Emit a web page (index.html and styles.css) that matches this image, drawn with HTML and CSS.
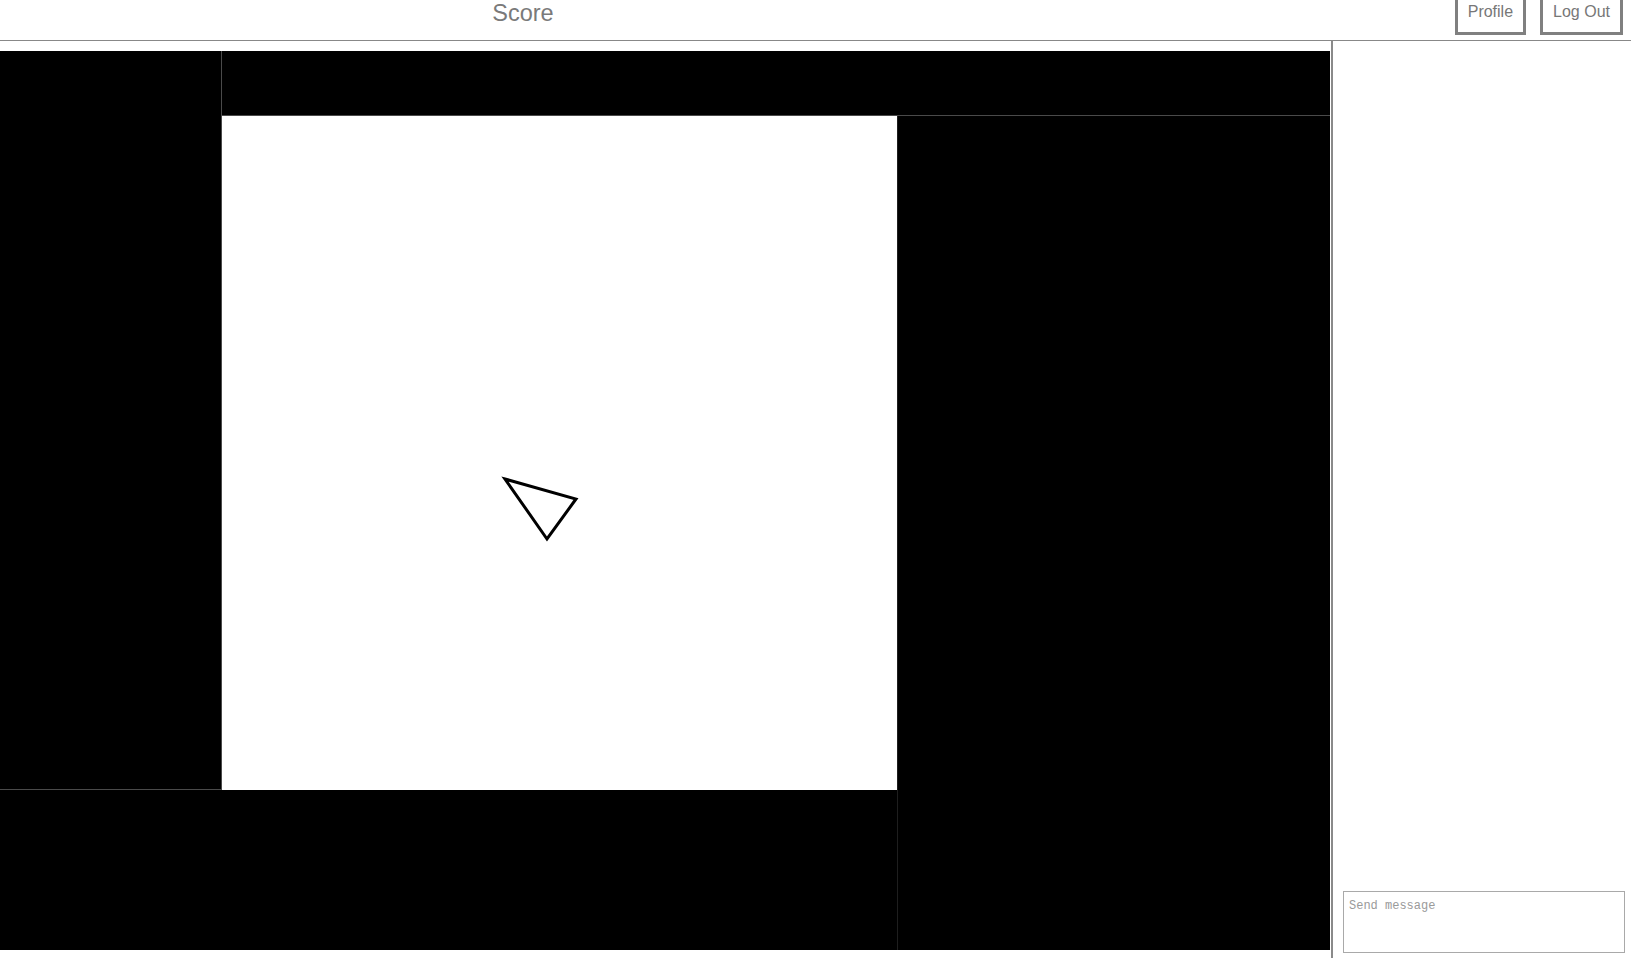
FILE: index.html
```html
<!DOCTYPE html>
<html lang="en">
<head>
<meta charset="utf-8">
<title>Score</title>
<link rel="stylesheet" href="styles.css">
</head>
<body>
<header class="topbar">
  <div class="score">Score</div>
  <nav class="actions">
    <button class="btn" type="button">Profile</button>
    <button class="btn" type="button">Log Out</button>
  </nav>
</header>
<main class="main">
  <section class="game">
    <div class="cell cell-left"></div>
    <div class="cell cell-top"></div>
    <div class="arena">
      <svg class="ship" width="675" height="674" viewBox="0 0 675 674" xmlns="http://www.w3.org/2000/svg">
        <polygon points="283,363 354,383 325,423" fill="none" stroke="#000" stroke-width="3" stroke-linejoin="miter"/>
      </svg>
    </div>
    <div class="cell cell-right"></div>
    <div class="cell cell-bottom"></div>
  </section>
  <aside class="chat">
    <textarea class="chat-input" placeholder="Send message"></textarea>
  </aside>
</main>
</body>
</html>
```
FILE: styles.css
```css
html, body {
  margin: 0;
  padding: 0;
  background: #fff;
}

body {
  font-family: "Liberation Sans", Arial, sans-serif;
  width: 1631px;
  height: 958px;
  overflow: hidden;
}

.topbar {
  display: flex;
  align-items: flex-start;
  height: 40px;
  border-bottom: 1px solid #888;
}

.score {
  width: 1046px;
  text-align: center;
  font-size: 23.5px;
  line-height: 24px;
  color: #7a7a7a;
  padding-top: 1px;
}

.actions {
  margin-left: auto;
  margin-right: 8px;
  display: flex;
  gap: 14px;
}

.btn {
  box-sizing: border-box;
  height: 38px;
  margin-top: -3px;
  border: 3px solid #808080;
  background: #fff;
  padding: 2px 10px 0;
  font-family: "Liberation Sans", Arial, sans-serif;
  font-size: 16px;
  line-height: 20px;
  color: #777;
  display: flex;
  align-items: flex-start;
}

.main {
  display: flex;
  height: 917px;
}

.game {
  margin-top: 10px;
  width: 1330px;
  height: 899px;
  display: grid;
  grid-template-columns: 222px 675px 433px;
  grid-template-rows: 65px 674px 160px;
  grid-template-areas:
    "left top top"
    "left arena right"
    "bottom bottom right";
  background: #000;
}

.cell {
  background: #000;
  box-sizing: border-box;
}

.cell-left {
  grid-area: left;
  border-right: 1px solid #4a4a4a;
  border-bottom: 1px solid #4a4a4a;
}

.cell-top {
  grid-area: top;
  border-bottom: 1px solid #4a4a4a;
}

.cell-right {
  grid-area: right;
  border-left: 1px solid #1e1e1e;
}

.cell-bottom {
  grid-area: bottom;
}

.arena {
  grid-area: arena;
  position: relative;
  background: #fff;
  overflow: hidden;
}

.ship {
  position: absolute;
  left: 0;
  top: 0;
  display: block;
}

.chat {
  margin-left: 1px;
  border-left: 2px solid #8a8a8a;
  flex: 1;
  display: flex;
  flex-direction: column;
  justify-content: flex-end;
  padding: 0 7px 5px 10px;
}

.chat-input {
  box-sizing: border-box;
  width: 282px;
  height: 62px;
  margin: 0;
  border: 1px solid #a9a9a9;
  padding: 7px 5px 5px;
  resize: none;
  font-family: "Liberation Mono", "DejaVu Sans Mono", monospace;
  font-size: 12px;
  color: #333;
  outline: none;
}

.chat-input::placeholder {
  color: #9a9a9a;
}
```
